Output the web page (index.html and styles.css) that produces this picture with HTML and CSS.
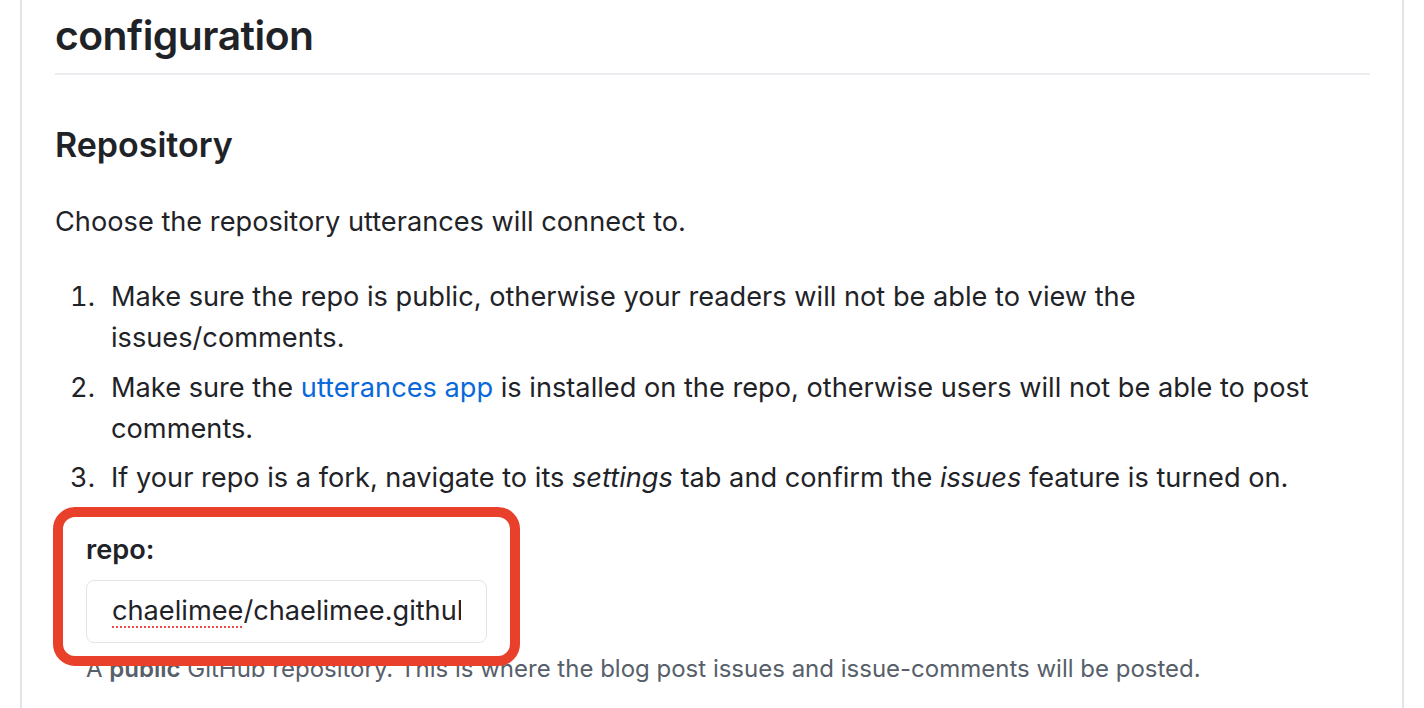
FILE: index.html
```html
<!DOCTYPE html>
<html lang="en">
<head>
<meta charset="utf-8">
<title>utterances configuration</title>
<link rel="stylesheet" href="styles.css">
</head>
<body>
<main class="page">
  <h2 class="title">configuration</h2>
  <h3 class="section-title">Repository</h3>
  <p class="para">Choose the repository utterances will connect to.</p>
  <ol class="steps">
    <li>Make sure the repo is public, otherwise your readers will not be able to view the issues/comments.</li>
    <li>Make sure the <a class="link" href="#">utterances app</a> is installed on the repo, otherwise users will not be able to post comments.</li>
    <li>If your repo is a fork, navigate to its <em>settings</em> tab and confirm the <em>issues</em> feature is turned on.</li>
  </ol>
  <div class="field">
    <div class="annot"></div>
    <label class="field-label">repo:</label>
    <div class="input"><span class="input-text"><span class="misspelled">chaelimee</span>/chaelimee.github.io</span></div>
    <p class="note">A <strong>public</strong> GitHub repository. This is where the blog post issues and issue-comments will be posted.</p>
  </div>
</main>
</body>
</html>
```
FILE: styles.css
```css
html, body {
  margin: 0;
  padding: 0;
  background: #ffffff;
  overflow: hidden;
}
body {
  font-family: "Inter", "Liberation Sans", sans-serif;
  color: #1f2328;
  font-size: 27.2px;
  line-height: 1.5;
}
.page {
  margin: 0 20px;
  height: 708px;
  box-sizing: border-box;
  border-left: 2px solid #e1e4e8;
  border-right: 2px solid #e1e4e8;
  padding: 10px 32px 0 33px;
}
.title {
  margin: 0;
  font-size: 40.8px;
  line-height: 1.25;
  font-weight: 600;
  padding-bottom: 12px;
  border-bottom: 2px solid #eaecef;
  letter-spacing: -0.5px;
}
.section-title {
  margin: 49px 0 0;
  font-size: 34px;
  line-height: 1.25;
  font-weight: 600;
}
.para {
  margin: 36px 0 0;
}
.steps {
  margin: 34px 0 0;
  padding-left: 56px;
}
.steps li::marker {
  content: counter(list-item) ".\2002\200A";
}
.steps li + li {
  margin-top: 9px;
}
.link {
  color: #0969da;
  text-decoration: none;
}
.field {
  position: relative;
  margin-top: 31px;
  padding-left: 31px;
}
.field-label {
  display: block;
  font-weight: 600;
}
.input {
  display: flex;
  margin-top: 9px;
  width: 401px;
  height: 63px;
  box-sizing: border-box;
  border: 1.5px solid #e1e4e8;
  border-radius: 8px;
  padding: 10px 25px;
  background: #fff;
}
.input-text {
  display: block;
  flex: 1;
  min-width: 0;
  white-space: nowrap;
  overflow: hidden;
}
.misspelled {
  text-decoration: underline dotted #f04b4b;
  text-decoration-thickness: 2px;
  text-underline-offset: 6px;
}
.note {
  margin: 8px 0 0;
  font-size: 24px;
  color: #57606a;
}
.note strong {
  font-weight: 600;
}
.annot {
  position: absolute;
  left: -2px;
  top: -23px;
  width: 467px;
  height: 159px;
  box-sizing: border-box;
  border: 10px solid #e8402a;
  border-radius: 22px;
  z-index: 2;
  pointer-events: none;
}
```
